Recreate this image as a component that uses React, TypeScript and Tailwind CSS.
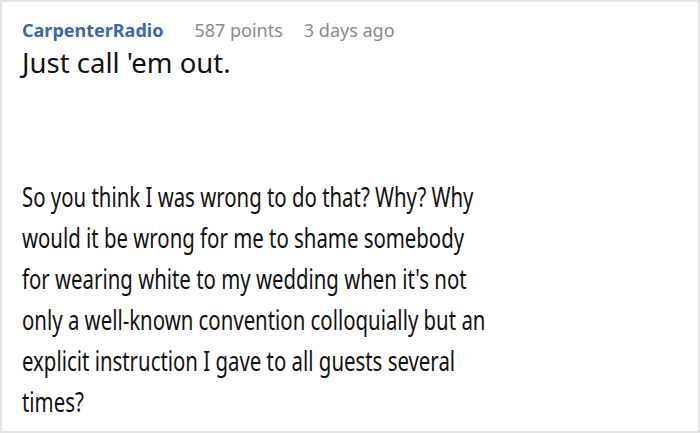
import React from 'react';

export default function App() {
  return (
    <div className="w-[700px] h-[433px] bg-white border-2 border-[#e3e3e3] overflow-hidden font-['Noto_Sans',sans-serif] text-[#111]">
      {/* Comment header */}
      <div className="flex items-baseline pl-[20px] pt-[15px] text-[18px] leading-[26px]">
        <span className="font-bold text-[#3a67b1]">CarpenterRadio</span>
        <span className="ml-[31px] text-[#8a8a8a]">587 points</span>
        <span className="ml-[21px] text-[#8a8a8a]">3 days ago</span>
      </div>
      <p className="pl-[20px] pt-[2px] text-[27.5px] leading-[36px]">Just call 'em out.</p>

      {/* Reply body */}
      <div className="pl-[20px] pt-[95px]">
        <p className="w-[619px] origin-left scale-x-[0.755] text-[27px] leading-[41px]">
          So you think I was wrong to do that? Why? Why would it be wrong for me to shame somebody for wearing white to my wedding when it's not only a well-known convention colloquially but an explicit instruction I gave to all guests several times?
        </p>
      </div>
    </div>
  );
}
